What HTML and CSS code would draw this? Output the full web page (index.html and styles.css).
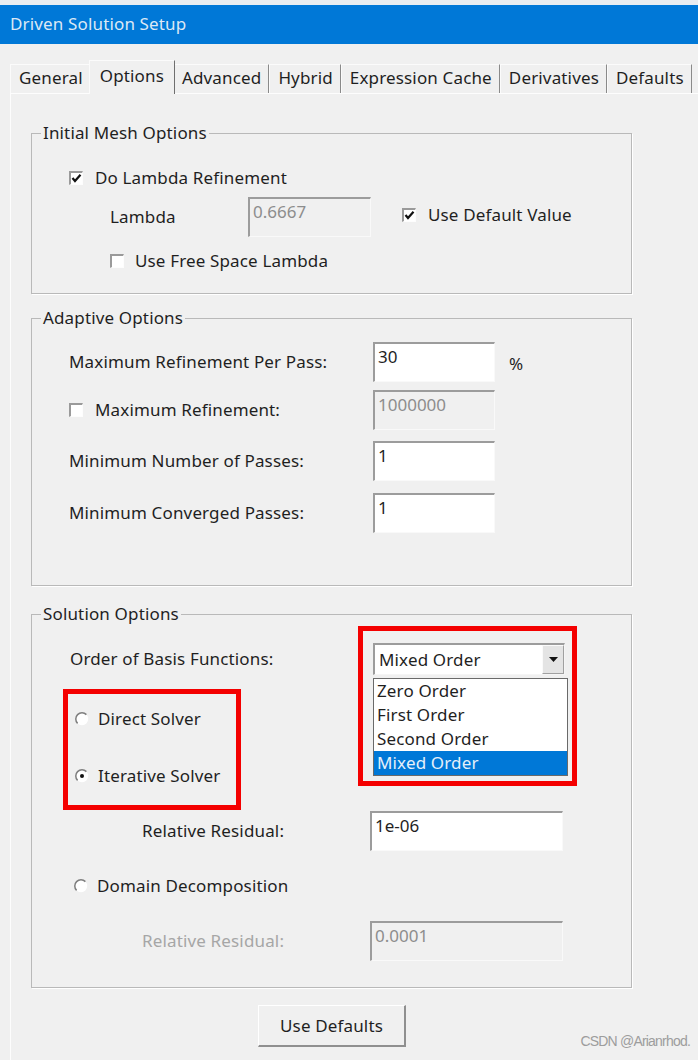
FILE: index.html
```html
<!DOCTYPE html>
<html lang="en">
<head>
<meta charset="utf-8">
<title>Driven Solution Setup</title>
<link rel="stylesheet" href="styles.css">
</head>
<body>
<div class="topstrip"></div>
<div class="titlebar">Driven Solution Setup</div>

<div class="tabbar">
  <div class="tab">General</div>
  <div class="tab active">Options</div>
  <div class="tab">Advanced</div>
  <div class="tab">Hybrid</div>
  <div class="tab">Expression Cache</div>
  <div class="tab">Derivatives</div>
  <div class="tab">Defaults</div>
</div>

<div class="panel">
  <fieldset class="group g1">
    <legend>Initial Mesh Options</legend>
    <div class="row r-dolambda">
      <span class="chk"><svg width="11" height="11" viewBox="0 0 11 11"><polyline points="1.5,5 4,8 9.5,1.8" fill="none" stroke="#111" stroke-width="2.2"/></svg></span>
      <span class="chk-label">Do Lambda Refinement</span>
    </div>
    <div class="row r-lambda">
      <span class="lbl-lambda">Lambda</span>
      <div class="field disabled w-lambda">0.6667</div>
      <span class="chk chk-default"><svg width="11" height="11" viewBox="0 0 11 11"><polyline points="1.5,5 4,8 9.5,1.8" fill="none" stroke="#111" stroke-width="2.2"/></svg></span>
      <span class="chk-label">Use Default Value</span>
    </div>
    <div class="row r-freespace">
      <span class="chk"></span>
      <span class="chk-label">Use Free Space Lambda</span>
    </div>
  </fieldset>

  <fieldset class="group g2">
    <legend>Adaptive Options</legend>
    <div class="row r-a1">
      <span class="lbl-adapt">Maximum Refinement Per Pass:</span>
      <div class="field w-adapt">30</div>
      <span class="unit">%</span>
    </div>
    <div class="row r-a2">
      <span class="lbl-adapt"><span class="chk"></span><span class="chk-label">Maximum Refinement:</span></span>
      <div class="field disabled w-adapt">1000000</div>
    </div>
    <div class="row r-a3">
      <span class="lbl-adapt">Minimum Number of Passes:</span>
      <div class="field w-adapt">1</div>
    </div>
    <div class="row r-a4">
      <span class="lbl-adapt">Minimum Converged Passes:</span>
      <div class="field w-adapt">1</div>
    </div>
  </fieldset>

  <fieldset class="group g3">
    <legend>Solution Options</legend>
    <div class="row r-order">
      <span class="lbl-order">Order of Basis Functions:</span>
      <div class="combo">
        <span class="combo-text">Mixed Order</span>
        <span class="combo-btn"><svg width="9" height="5" viewBox="0 0 9 5"><polygon points="0,0 9,0 4.5,5" fill="#111"/></svg></span>
        <div class="dropdown">
          <div class="opt">Zero Order</div>
          <div class="opt">First Order</div>
          <div class="opt">Second Order</div>
          <div class="opt selected">Mixed Order</div>
        </div>
        <div class="mark mark-combo"></div>
      </div>
    </div>

    <div class="solver-box">
      <div class="row r-direct">
        <span class="radio"><svg width="14" height="14" viewBox="0 0 14 14"><circle cx="7" cy="7" r="6.2" fill="#fff"/><path d="M2.6 11.4 A6.2 6.2 0 0 1 11.4 2.6" fill="none" stroke="#7e7e7e" stroke-width="1.5"/></svg></span>
        <span class="radio-label">Direct Solver</span>
      </div>
      <div class="row r-iter">
        <span class="radio"><svg width="14" height="14" viewBox="0 0 14 14"><circle cx="7" cy="7" r="6.2" fill="#fff"/><path d="M2.6 11.4 A6.2 6.2 0 0 1 11.4 2.6" fill="none" stroke="#7e7e7e" stroke-width="1.5"/><circle cx="7" cy="7" r="2" fill="#111"/></svg></span>
        <span class="radio-label">Iterative Solver</span>
      </div>
    </div>

    <div class="row r-resid">
      <span class="lbl-resid">Relative Residual:</span>
      <div class="field w-resid">1e-06</div>
    </div>
    <div class="row r-domain">
      <span class="radio"><svg width="14" height="14" viewBox="0 0 14 14"><circle cx="7" cy="7" r="6.2" fill="#fff"/><path d="M2.6 11.4 A6.2 6.2 0 0 1 11.4 2.6" fill="none" stroke="#7e7e7e" stroke-width="1.5"/></svg></span>
      <span class="radio-label">Domain Decomposition</span>
    </div>
    <div class="row r-resid2">
      <span class="lbl-resid dim">Relative Residual:</span>
      <div class="field disabled w-resid">0.0001</div>
    </div>
  </fieldset>

  <div class="btn-row">
    <button class="btn" type="button">Use Defaults</button>
  </div>
</div>

<div class="watermark">CSDN @Arianrhod.</div>
</body>
</html>
```

FILE: styles.css
```css
* { box-sizing: border-box; }
html, body { margin: 0; padding: 0; }
body {
  width: 698px;
  height: 1060px;
  overflow: hidden;
  position: relative;
  background: #f0f0f0;
  font-family: "Noto Sans", "Open Sans", sans-serif;
  font-size: 17px;
  letter-spacing: 0.15px;
  line-height: 20px;
  color: #1f1f1f;
}

.topstrip { height: 5px; background: #e9edf1; }
.titlebar {
  height: 39px;
  background: #0078d7;
  color: #dce8f5;
  padding: 0 0 2px 10px;
  display: flex;
  align-items: center;
}

/* tabs */
.tabbar {
  display: flex;
  align-items: flex-end;
  height: 49px;
  padding-left: 10px;
}
.tab {
  height: 29px;
  display: flex;
  align-items: center;
  padding: 0 7px 2px 8px;
  border-top: 1px solid #fbfbfb;
  border-left: 1px solid #fbfbfb;
  border-right: 1px solid #8a8a8a;
  white-space: nowrap;
}
.tab.active {
  height: 34px;
  margin: 0 -2px -1px -2px;
  padding: 0 10px 4px 10px;
  position: relative;
  z-index: 1;
  background: #f0f0f0;
  border-right: 1px solid #6f6f6f;
}

.panel {
  margin-left: 10px;
  height: 967px;
  border-left: 1px solid #fdfdfd;
  border-top: 1px solid #fdfdfd;
  padding: 29px 0 0 20px;
}

/* group boxes */
.group {
  margin: 0;
  padding: 0;
  width: 601px;
  min-width: 0;
  border: 1px solid #b9b9b9;
  box-shadow: 1px 1px 0 #ffffff;
}
.group legend {
  margin-left: 9px;
  padding: 0 2px;
  height: 20px;
  line-height: 20px;
}
.g1 { padding-bottom: 17px; }
.g2 { margin-top: 14px; padding-bottom: 52px; }
.g3 { margin-top: 18px; padding-bottom: 26px; }

.row { display: flex; align-items: center; }

/* controls */
.chk {
  width: 14px;
  height: 14px;
  flex: none;
  background: #fff;
  border-style: solid;
  border-width: 2px 1px 1px 2px;
  border-color: #9a9a9a #fdfdfd #fdfdfd #9a9a9a;
  display: flex;
  align-items: center;
  justify-content: center;
}
.chk svg { display: block; }
.chk-label { margin-left: 12px; white-space: nowrap; }

.radio { width: 14px; height: 14px; flex: none; }
.radio svg { display: block; }
.radio-label { margin-left: 9px; white-space: nowrap; }

.field {
  height: 40px;
  flex: none;
  background: #fff;
  border-style: solid;
  border-width: 2px 1px 1px 2px;
  border-color: #9c9c9c #f9f9f9 #f9f9f9 #9c9c9c;
  padding: 3px 3px 0 3px;
  line-height: 20px;
  letter-spacing: 0;
}
.field.disabled { background: #f0f0f0; color: #8d8d8d; }

/* group 1 rows */
.r-dolambda { margin-top: 20px; height: 30px; padding-left: 37px; }
.r-lambda { margin-top: 4px; height: 40px; padding-left: 78px; }
.lbl-lambda { width: 138px; flex: none; }
.w-lambda { width: 123px; }
.chk-default { margin-left: 31px; margin-bottom: 5px; }
.r-lambda .chk-label { margin-bottom: 5px; }
.r-freespace { margin-top: 9px; height: 30px; padding-left: 78px; }
.r-freespace .chk-label { margin-left: 11px; }

/* group 2 rows */
.r-a1, .r-a2, .r-a3, .r-a4 { height: 40px; padding-left: 37px; }
.r-a1 { margin-top: 14px; }
.r-a2 { margin-top: 8px; }
.r-a3 { margin-top: 11px; }
.r-a4 { margin-top: 12px; }
.lbl-adapt { width: 304px; flex: none; display: flex; align-items: center; white-space: nowrap; }
.w-adapt { width: 122px; }
.unit { margin-left: 14px; margin-top: 3px; }

/* group 3 rows */
.r-order { margin-top: 19px; height: 32px; padding-left: 38px; }
.lbl-order { width: 303px; flex: none; }
.combo {
  position: relative;
  width: 192px;
  height: 32px;
  background: #fff;
  border-style: solid;
  border-width: 2px 1px 1px 2px;
  border-color: #9c9c9c #f5f5f5 #f5f5f5 #9c9c9c;
  display: flex;
  align-items: center;
}
.combo-text { padding-left: 4px; flex: 1; }
.combo-btn {
  width: 22px;
  height: 29px;
  background: #e4e4e4;
  border-style: solid;
  border-width: 1px;
  border-color: #fafafa #a0a0a0 #a0a0a0 #fafafa;
  display: flex;
  align-items: center;
  justify-content: center;
}
.dropdown {
  position: absolute;
  top: 33px;
  left: -2px;
  width: 195px;
  height: 98px;
  background: #fff;
  border: 1px solid #6a6a6a;
  z-index: 2;
}
.opt { height: 24px; line-height: 24px; padding-left: 3px; white-space: nowrap; }
.opt.selected { background: #0078d7; color: #e6f0fa; }
.mark {
  position: absolute;
  border: 5px solid #f40000;
  z-index: 3;
  pointer-events: none;
}
.mark-combo { left: -17px; top: -19px; width: 219px; height: 160px; }

.solver-box {
  margin-top: 14px;
  margin-left: 31px;
  width: 178px;
  height: 121px;
  border: 5px solid #f40000;
  padding: 10px 0 0 7px;
}
.r-direct { height: 30px; }
.r-iter { height: 30px; margin-top: 27px; }

.r-resid { margin-top: 1px; height: 40px; padding-left: 110px; }
.lbl-resid { width: 228px; flex: none; white-space: nowrap; }
.lbl-resid.dim { color: #a6a6a6; }
.w-resid { width: 193px; }
.r-domain { margin-top: 20px; height: 30px; padding-left: 42px; }
.r-resid2 { margin-top: 20px; height: 40px; padding-left: 110px; }

/* button */
.btn-row { width: 601px; margin-top: 17px; display: flex; justify-content: center; }
.btn {
  width: 148px;
  height: 42px;
  margin-left: 1px;
  font: inherit;
  letter-spacing: inherit;
  color: #1f1f1f;
  background: #f0f0f0;
  border-style: solid;
  border-width: 1px 2px 2px 1px;
  border-color: #ffffff #8f8f8f #8f8f8f #ffffff;
  padding: 0;
}

.watermark {
  position: absolute;
  right: 8px;
  bottom: 9px;
  font-family: "Liberation Sans", sans-serif;
  font-size: 14px;
  letter-spacing: -0.8px;
  color: #9d9d9d;
}
```
